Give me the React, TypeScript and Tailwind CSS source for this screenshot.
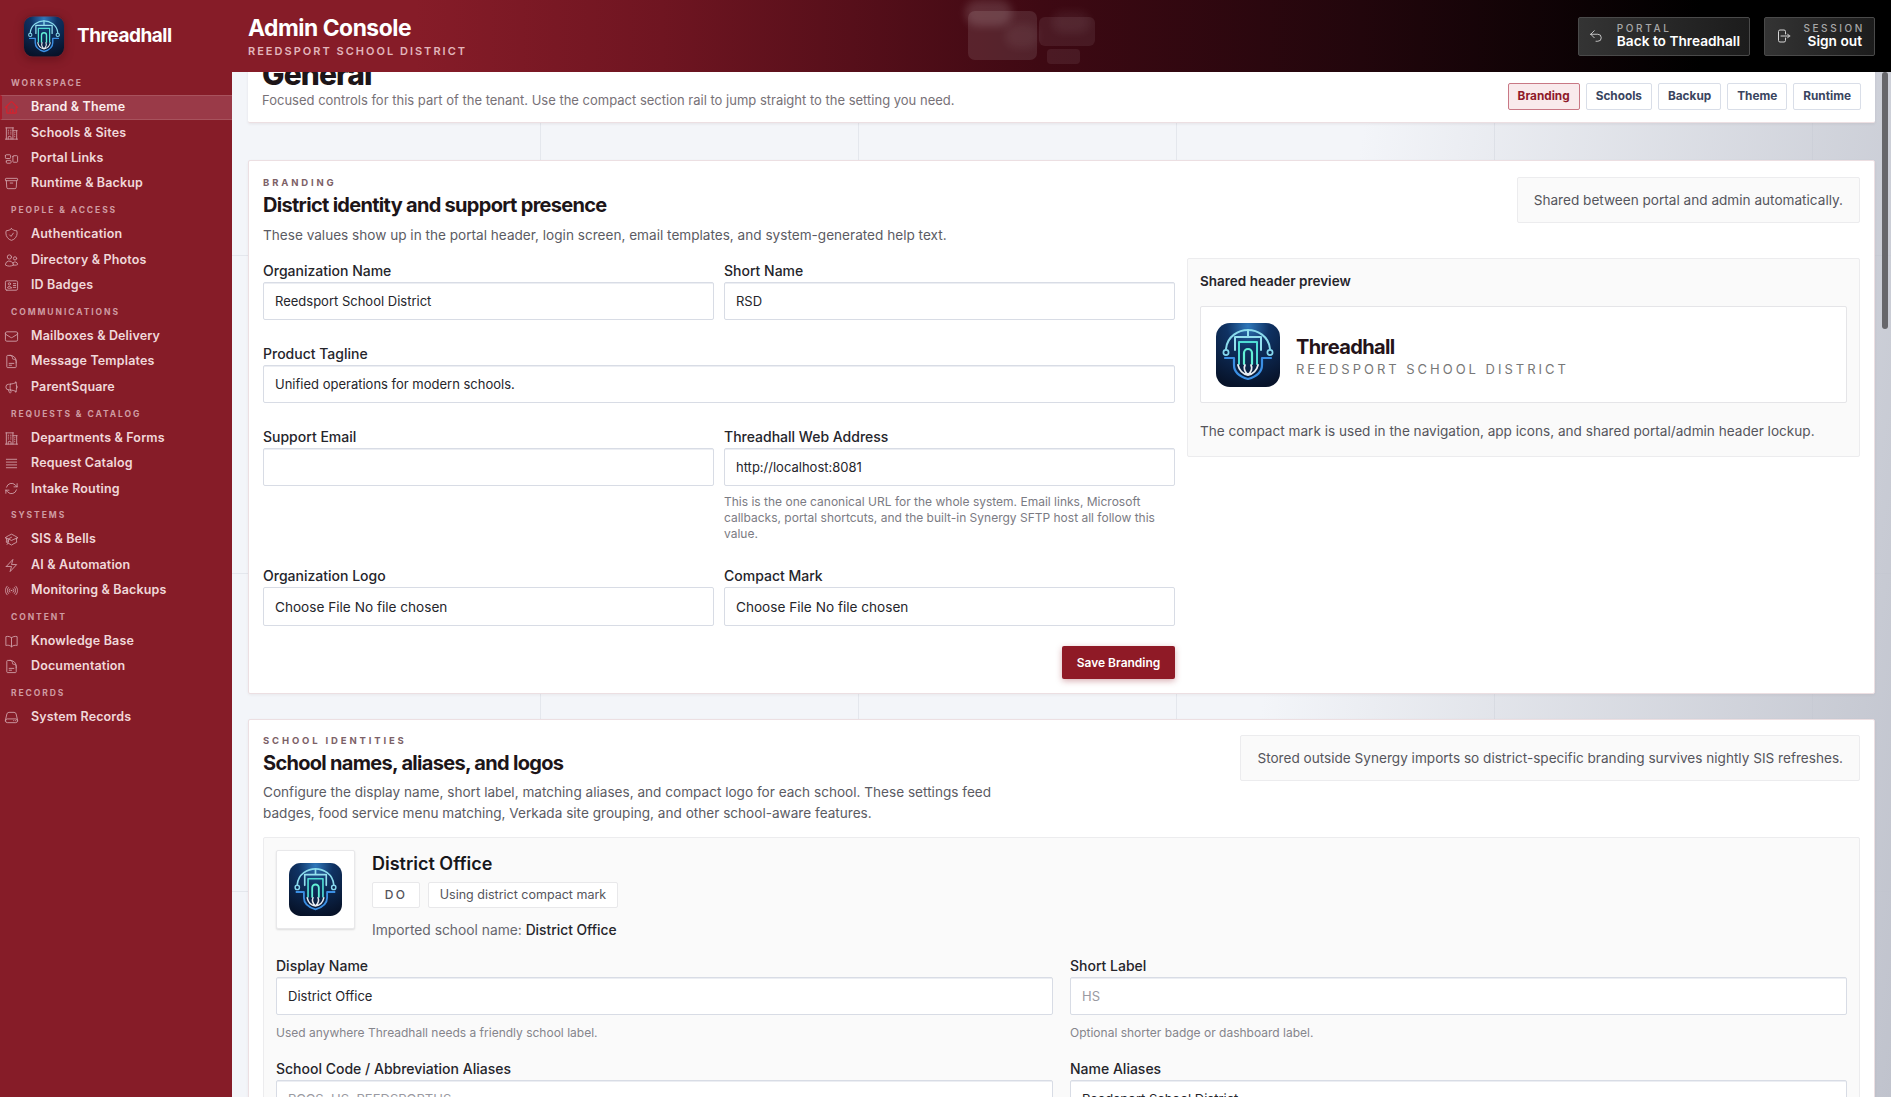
import { ReactNode } from "react";
import {
  HiOutlineHome,
  HiOutlineBuildingOffice2,
  HiOutlineRectangleGroup,
  HiOutlineArchiveBox,
  HiOutlineShieldCheck,
  HiOutlineUsers,
  HiOutlineIdentification,
  HiOutlineEnvelope,
  HiOutlineDocumentText,
  HiOutlineMegaphone,
  HiOutlineBars4,
  HiOutlineArrowPath,
  HiOutlineAcademicCap,
  HiOutlineBolt,
  HiOutlineSignal,
  HiOutlineBookOpen,
  HiOutlineServer,
  HiOutlineArrowUturnLeft,
  HiOutlineArrowRightStartOnRectangle,
} from "react-icons/hi2";

const nav = [
  {
    title: "WORKSPACE",
    items: [
      { label: "Brand & Theme", icon: HiOutlineHome, active: true },
      { label: "Schools & Sites", icon: HiOutlineBuildingOffice2 },
      { label: "Portal Links", icon: HiOutlineRectangleGroup },
      { label: "Runtime & Backup", icon: HiOutlineArchiveBox },
    ],
  },
  {
    title: "PEOPLE & ACCESS",
    items: [
      { label: "Authentication", icon: HiOutlineShieldCheck },
      { label: "Directory & Photos", icon: HiOutlineUsers },
      { label: "ID Badges", icon: HiOutlineIdentification },
    ],
  },
  {
    title: "COMMUNICATIONS",
    items: [
      { label: "Mailboxes & Delivery", icon: HiOutlineEnvelope },
      { label: "Message Templates", icon: HiOutlineDocumentText },
      { label: "ParentSquare", icon: HiOutlineMegaphone },
    ],
  },
  {
    title: "REQUESTS & CATALOG",
    items: [
      { label: "Departments & Forms", icon: HiOutlineBuildingOffice2 },
      { label: "Request Catalog", icon: HiOutlineBars4 },
      { label: "Intake Routing", icon: HiOutlineArrowPath },
    ],
  },
  {
    title: "SYSTEMS",
    items: [
      { label: "SIS & Bells", icon: HiOutlineAcademicCap },
      { label: "AI & Automation", icon: HiOutlineBolt },
      { label: "Monitoring & Backups", icon: HiOutlineSignal },
    ],
  },
  {
    title: "CONTENT",
    items: [
      { label: "Knowledge Base", icon: HiOutlineBookOpen },
      { label: "Documentation", icon: HiOutlineDocumentText },
    ],
  },
  {
    title: "RECORDS",
    items: [{ label: "System Records", icon: HiOutlineServer }],
  },
];

const tabs = ["Branding", "Schools", "Backup", "Theme", "Runtime"];

function Logo({ className }: { className?: string }) {
  return (
    <svg viewBox="0 0 64 64" className={className}>
      <defs>
        <radialGradient id="logoBg" cx="50%" cy="5%" r="95%">
          <stop offset="0%" stopColor="#2f78bb" />
          <stop offset="35%" stopColor="#0f3263" />
          <stop offset="100%" stopColor="#07132a" />
        </radialGradient>
      </defs>
      <rect width="64" height="64" rx="14" fill="url(#logoBg)" />
      <g fill="none" strokeLinecap="round" strokeLinejoin="round">
        <path d="M10 26C11 13 23 7 32 7s21 6 22 19" stroke="#8adbec" strokeWidth="2" />
        <path d="M32 7v7M19 27V14h26v13" stroke="#93e0ee" strokeWidth="2" />
        <circle cx="10" cy="29.5" r="2.6" stroke="#86d8ee" strokeWidth="1.7" />
        <circle cx="54" cy="29.5" r="2.6" stroke="#86d8ee" strokeWidth="1.7" />
        <path d="M23 41V19h18v22" stroke="#4fdcd4" strokeWidth="2" />
        <path d="M28 41V30a4 4 0 0 1 8 0v11" stroke="#62f0d6" strokeWidth="2.2" />
        <path d="M9 35h9v7c0 8 7 12 14 14 7-2 14-6 14-14v-7h9" stroke="#3b8fe4" strokeWidth="2.2" />
        <path
          d="M32 52c-5-1-9-5-10-10M32 52c5-1 9-5 10-10M32 52c-3-3-5-6-3-10M32 52c3-3 5-6 3-10"
          stroke="#e9edf2"
          strokeWidth="1.8"
        />
      </g>
    </svg>
  );
}

function TopButton({
  icon,
  top,
  bottom,
  align,
  className,
}: {
  icon: ReactNode;
  top: string;
  bottom: string;
  align: string;
  className: string;
}) {
  return (
    <button
      className={`flex h-[39px] items-center justify-between rounded-[2px] border border-[#4a4a4a] bg-gradient-to-r from-[#343434] to-[#1c1c1c] pl-[10px] pr-[9px] ${className}`}
    >
      <span className="text-[#d5d5d5]">{icon}</span>
      <span className={`-mt-[1px] flex flex-col leading-none ${align}`}>
        <span className="text-[10px] font-medium leading-[11px] tracking-[0.26em] text-[#a8a8a8]">{top}</span>
        <span className={`text-[13.7px] font-semibold leading-[15px] text-white ${bottom === "Sign out" ? "mr-[3px]" : ""}`}>
          {bottom}
        </span>
      </span>
    </button>
  );
}

function Sidebar() {
  return (
    <aside className="w-[232px] shrink-0 overflow-hidden bg-[#861c28]">
      <div className="-mt-[2.5px]">
        {nav.map((section) => (
          <div key={section.title}>
            <div className="flex h-[25.5px] items-center pl-[11px] pt-[3px] text-[8.5px] font-bold tracking-[0.226em] text-[#cf9ba2]">
              {section.title}
            </div>
            {section.items.map((item) => {
              const Icon = item.icon;
              return (
                <div
                  key={item.label}
                  className={`flex h-[25.4px] items-center text-[12.5px] font-semibold tracking-[0.012em] ${
                    item.active
                      ? "border-y border-l-2 border-y-[#a8525d] border-l-[#a81c2b] bg-[#9a3a48] pl-[2px] text-[#fbeeee]"
                      : "pl-[4px] text-[#f0d8da]"
                  }`}
                >
                  <Icon
                    strokeWidth={item.active ? 2 : 1.5}
                    className={`mr-[12px] h-[15px] w-[15px] shrink-0 ${item.active ? "text-[#d4222e]" : "text-[#cc9aa2]"}`}
                  />
                  {item.label}
                </div>
              );
            })}
          </div>
        ))}
      </div>
    </aside>
  );
}

function Header() {
  return (
    <header className="relative flex h-[72px] shrink-0 items-center bg-[linear-gradient(90deg,#861c28_0%,#861c28_22%,#6f1521_35%,#3e0913_55%,#22060c_72%,#000_90%)]">
      <div className="flex w-[248px] shrink-0 items-center pl-[23px]">
        <div className="rounded-[9px] border border-[#6f1a24] shadow-[0_2px_8px_rgba(60,0,10,0.35)]">
          <Logo className="block h-[41px] w-[40px]" />
        </div>
        <span className="ml-[12px] text-[19px] font-bold tracking-[-0.025em] text-white">Threadhall</span>
      </div>
      <div className="flex flex-col">
        <span className="text-[22.8px] font-bold leading-[28px] tracking-[-0.02em] text-white">Admin Console</span>
        <span className="mt-[3px] text-[11px] font-semibold leading-[13px] tracking-[0.183em] text-[#e2b6bc]">
          REEDSPORT SCHOOL DISTRICT
        </span>
      </div>

      {/* Decorative glass tiles */}
      <div className="absolute left-[968px] top-[11px] h-[49px] w-[69px] rounded-[7px] bg-white/10" />
      <div className="absolute left-[1039px] top-[17px] h-[29px] w-[56px] rounded-[6px] bg-white/7" />
      <div className="absolute left-[1047px] top-[49px] h-[15px] w-[33px] rounded-[4px] bg-white/7" />
      <div className="absolute left-[965px] top-0 h-[26px] w-[47px] rounded-full bg-white/14 blur-[4px]" />
      <div className="absolute left-[1052px] top-[11px] h-[22px] w-[38px] rounded-full bg-white/6 blur-[4px]" />
      <div className="absolute left-[1005px] top-[24px] h-[24px] w-[34px] rounded-full bg-white/6 blur-[4px]" />

      <div className="ml-auto mr-[16px] flex gap-[14px]">
        <TopButton
          className="w-[172px]"
          align="items-start"
          icon={<HiOutlineArrowUturnLeft className="h-[14px] w-[14px]" />}
          top="PORTAL"
          bottom="Back to Threadhall"
        />
        <TopButton
          className="w-[111px]"
          align="items-end"
          icon={<HiOutlineArrowRightStartOnRectangle className="h-[16px] w-[16px]" />}
          top="SESSION"
          bottom="Sign out"
        />
      </div>
    </header>
  );
}

function Field({
  label,
  value,
  placeholder,
  file,
  children,
}: {
  label: string;
  value?: string;
  placeholder?: string;
  file?: boolean;
  children?: ReactNode;
}) {
  return (
    <div>
      <label className="mb-px block text-[14px] font-medium leading-[20px] text-[#25252b]">{label}</label>
      {file ? (
        <input
          type="file"
          className="block h-[39px] w-full rounded-[2px] border border-[#d8dce5] bg-white px-[11px] py-[9px] text-[13.6px] leading-[20px] text-[#25252b]"
        />
      ) : (
        <input
          readOnly
          defaultValue={value}
          placeholder={placeholder}
          className="block h-[38px] w-full rounded-[2px] border border-[#d8dce5] bg-white px-[11px] text-[13px] text-[#25252b] shadow-[inset_0_1px_0_#eceef3] outline-none placeholder:text-[#9a9aa2]"
        />
      )}
      {children}
    </div>
  );
}

function SectionHead({
  eyebrow,
  title,
  note,
  children,
}: {
  eyebrow: string;
  title: string;
  note: string;
  children: ReactNode;
}) {
  return (
    <div className="flex items-start justify-between">
      <div>
        <div className="text-[9.5px] font-bold leading-[12px] tracking-[0.3em] text-[#7c6167]">{eyebrow}</div>
        <h2 className="mt-[3px] text-[20px] font-bold leading-[26px] tracking-[-0.035em] text-[#1d1518]">{title}</h2>
        {children}
      </div>
      <div className="rounded-[2px] border border-[#ececee] bg-[#fafafa] px-[16px] py-[12px] text-[13.6px] leading-[20px] text-[#55555c]">
        {note}
      </div>
    </div>
  );
}

export default function App() {
  return (
    <div className="flex h-screen w-full flex-col overflow-hidden font-['Inter',sans-serif]">
      <Header />
      <div className="flex min-h-0 flex-1">
        <Sidebar />
        <main className="relative min-w-0 flex-1 overflow-hidden bg-[#f3f5f9] [background-image:linear-gradient(100deg,transparent_62%,#c0c3cd_100%),linear-gradient(to_right,#e4e7ed_1px,transparent_1px),linear-gradient(to_bottom,#e4e7ed_1px,transparent_1px)] [background-position:0_0,308px_0,0_183px] [background-size:100%_100%,318px_318px,318px_318px]">
          <div className="pl-[16px] pr-[16px]">
            {/* Page intro, scrolled partly under the header */}
            <section className="-mt-[26px] flex items-end justify-between rounded-[2px] border-b border-[#ecdfe2] bg-white pb-[12px] pl-[14px] pr-[14px] pt-[12px] shadow-[0_1px_3px_rgba(60,30,40,0.08)]">
              <div>
                <h1 className="text-[30px] font-extrabold leading-[32px] tracking-[-0.03em] text-[#1d1518]">General</h1>
                <p className="text-[13px] leading-[20px] text-[#777177]">
                  Focused controls for this part of the tenant. Use the compact section rail to jump straight to the
                  setting you need.
                </p>
              </div>
              <div className="flex gap-[6px]">
                {tabs.map((tab, i) => (
                  <span
                    key={tab}
                    className={`flex h-[27px] items-center rounded-[2px] border px-[9px] text-[11.8px] font-bold ${
                      i === 0
                        ? "border-[#c97885] bg-[#f9eaec] text-[#8f1a2b]"
                        : "border-[#d9dee8] bg-white text-[#3a4560]"
                    }`}
                  >
                    {tab}
                  </span>
                ))}
              </div>
            </section>

            {/* Branding */}
            <section className="mt-[37px] rounded-[2px] border border-[#ecdfe2] bg-white px-[14px] pb-[14px] pt-[16px] shadow-[0_1px_3px_rgba(60,30,40,0.06)]">
              <SectionHead
                eyebrow="BRANDING"
                title="District identity and support presence"
                note="Shared between portal and admin automatically."
              >
                <p className="mt-[7px] text-[13.6px] leading-[20px] text-[#5b5b63]">
                  These values show up in the portal header, login screen, email templates, and system-generated help
                  text.
                </p>
              </SectionHead>

              <div className="mt-[13px] grid grid-cols-[912px_1fr] gap-[12px]">
                <div className="pt-[3px]">
                  <div className="grid grid-cols-2 gap-x-[10px] gap-y-[24px]">
                    <Field label="Organization Name" value="Reedsport School District" />
                    <Field label="Short Name" value="RSD" />
                    <div className="col-span-2">
                      <Field label="Product Tagline" value="Unified operations for modern schools." />
                    </div>
                    <Field label="Support Email" value="" />
                    <Field label="Threadhall Web Address" value="http://localhost:8081">
                      <p className="mt-[8px] text-[12px] leading-[16px] text-[#7b7b83]">
                        This is the one canonical URL for the whole system. Email links, Microsoft callbacks, portal
                        shortcuts, and the built-in Synergy SFTP host all follow this value.
                      </p>
                    </Field>
                    <Field label="Organization Logo" file />
                    <Field label="Compact Mark" file />
                  </div>
                  <div className="mt-[20px] flex justify-end">
                    <button className="h-[33px] w-[113px] rounded-[2px] bg-[#8f1a26] text-[12px] font-semibold text-white shadow-[0_2px_6px_rgba(143,26,38,0.35)]">
                      Save Branding
                    </button>
                  </div>
                </div>

                <div className="self-start rounded-[2px] border border-[#ececee] bg-[#fafafa] px-[12px] pb-[15px] pt-[12px]">
                  <div className="text-[13.5px] font-semibold leading-[20px] text-[#25252b]">Shared header preview</div>
                  <div className="mt-[15px] flex h-[97px] items-center gap-[16px] rounded-[2px] border border-[#e5e5e8] bg-white px-[15px]">
                    <Logo className="h-[64px] w-[64px] shrink-0" />
                    <div className="pt-[4px]">
                      <div className="text-[20px] font-bold leading-[24px] tracking-[-0.03em] text-[#241319]">Threadhall</div>
                      <div className="mt-px text-[13px] leading-[18px] tracking-[0.23em] text-[#777]">
                        REEDSPORT SCHOOL DISTRICT
                      </div>
                    </div>
                  </div>
                  <p className="mt-[18px] text-[13.6px] leading-[20px] text-[#55555c]">
                    The compact mark is used in the navigation, app icons, and shared portal/admin header lockup.
                  </p>
                </div>
              </div>
            </section>

            {/* School identities */}
            <section className="mt-[25px] rounded-[2px] border border-[#ecdfe2] bg-white px-[14px] pt-[15px] shadow-[0_1px_3px_rgba(60,30,40,0.06)]">
              <SectionHead
                eyebrow="SCHOOL IDENTITIES"
                title="School names, aliases, and logos"
                note="Stored outside Synergy imports so district-specific branding survives nightly SIS refreshes."
              >
                <p className="mt-[6px] w-[760px] text-[13.6px] leading-[21px] text-[#5b5b63]">
                  Configure the display name, short label, matching aliases, and compact logo for each school. These
                  settings feed badges, food service menu matching, Verkada site grouping, and other school-aware
                  features.
                </p>
              </SectionHead>

              <div className="mt-[13px] rounded-[2px] border border-[#ececee] bg-[#fafafa] px-[12px] pt-[12px]">
                <div className="flex gap-[17px]">
                  <div className="flex h-[79px] w-[79px] shrink-0 items-center justify-center rounded-[2px] border border-[#e8e8ea] bg-white shadow-[0_1px_2px_rgba(0,0,0,0.12)]">
                    <Logo className="h-[53px] w-[53px]" />
                  </div>
                  <div>
                    <div className="text-[18px] font-semibold leading-[28px] text-[#17171b]">District Office</div>
                    <div className="mt-[4px] flex gap-[8px]">
                      <span className="flex h-[26px] w-[48px] items-center justify-center rounded-[2px] border border-[#e8e8ea] bg-white text-[12px] font-medium tracking-[0.2em] text-[#55555c]">
                        DO
                      </span>
                      <span className="flex h-[26px] w-[190px] items-center justify-center rounded-[2px] border border-[#e8e8ea] bg-white text-[12.5px] text-[#55555c]">
                        Using district compact mark
                      </span>
                    </div>
                    <p className="mt-[12px] text-[13.8px] leading-[20px] text-[#66666e]">
                      Imported school name: <span className="font-medium text-[#25252b]">District Office</span>
                    </p>
                  </div>
                </div>

                <div className="mt-[16px] grid grid-cols-2 gap-x-[17px] gap-y-[18px]">
                  <Field label="Display Name" value="District Office">
                    <p className="mt-[10px] text-[12px] leading-[16px] text-[#85858c]">
                      Used anywhere Threadhall needs a friendly school label.
                    </p>
                  </Field>
                  <Field label="Short Label" placeholder="HS">
                    <p className="mt-[10px] text-[12px] leading-[16px] text-[#85858c]">
                      Optional shorter badge or dashboard label.
                    </p>
                  </Field>
                  <Field label="School Code / Abbreviation Aliases" placeholder="RCCS, HS, REEDSPORTHS" />
                  <Field label="Name Aliases" value="Reedsport School District" />
                </div>
              </div>
            </section>
          </div>

          {/* Page scrollbar */}
          <div className="absolute right-[3px] top-0 h-[257px] w-[6px] rounded-full bg-[#67676b]" />
        </main>
      </div>
    </div>
  );
}
